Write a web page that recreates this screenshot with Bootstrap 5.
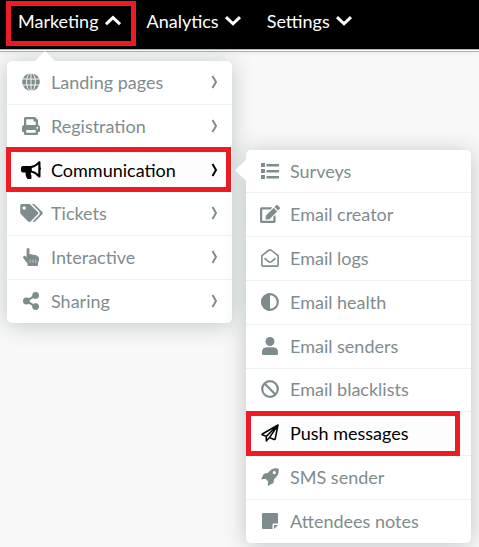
<!DOCTYPE html>
<html lang="en">
<head>
<meta charset="utf-8">
<meta name="viewport" content="width=device-width, initial-scale=1">
<title>Event manager</title>
<link href="https://cdn.jsdelivr.net/npm/bootstrap@5.3.0/dist/css/bootstrap.min.css" rel="stylesheet">
<style>
body { background: #f8f8f8; font-family: Lato, "Liberation Sans", sans-serif; font-size: 18px; line-height: 24px; }
.topbar { background: #000; padding: 9px 18px 16px; border-bottom: 1px solid #b5b5b5; box-shadow: 0 1px #fff, 0 2px #b0b0b0, 0 3px 4px rgba(0,0,0,.06); }
.topnav { gap: 26px; }
.topnav > li > button { color: #fff; gap: 6px; font-size: 18px; line-height: 24px; }
svg { display: block; fill: currentColor; flex: none; }
.line { fill: none; stroke: currentColor; }
.flyout { display: flex; flex-direction: column; width: 225px; min-height: 262px; border-radius: 5px; box-shadow: 0 2px 22px rgba(52,73,74,.28); z-index: 10; }
.flyout > li { flex: 1 1 0; display: flex; position: relative; }
.flyout > li + li { border-top: 1px solid #ecf0f1; }
.entry { display: flex; flex: 1; align-items: center; gap: 8px; padding: 8px 14px 9px 12px; color: #7f8c8d; text-decoration: none; }
.entry.current { color: #000; background: #fdfdfd; }
.glyph { width: 24px; display: flex; justify-content: center; flex: none; }
.main-menu { top: 52px; left: -11px; }
.flyout.sub-menu { top: 1px; left: 239px; min-height: 393px; }
.flyout::before { content: ""; position: absolute; background: #fff; }
.main-menu::before { left: 27px; top: -10px; width: 22px; height: 11px; clip-path: polygon(50% 0, 100% 100%, 0 100%); }
.sub-menu::before { left: -11px; top: 9px; width: 12px; height: 23px; clip-path: polygon(100% 0, 100% 100%, 0 50%); }
.framed { position: relative; }
.framed::after { content: ""; position: absolute; border: 5px solid #ed1c24; pointer-events: none; z-index: 2; }
.frame-nav::after { inset: -8px -15px -13px -12px; }
.frame-main::after { inset: -2px 1px -1px -1px; }
.frame-sub::after { inset: -1px 11px -1px 0; }
</style>
</head>
<body class="min-vh-100">
<header class="topbar">
<nav aria-label="Main">
<ul class="topnav list-unstyled d-flex mb-0">
<li class="framed frame-nav">
<button type="button" class="btn p-0 border-0 rounded-0 d-flex align-items-center" aria-expanded="true">Marketing
<svg class="line" width="16" height="12" viewBox="0 0 16 12" stroke-width="3"><path d="M1 9.2 8 2.6l7 6.6"/></svg></button>
<ul class="flyout main-menu list-unstyled position-absolute bg-white mb-0">
<li><a class="entry" href="#"><span class="glyph"><svg width="18" height="18" viewBox="0 0 18 18"><circle cx="9" cy="9" r="8.8"/><path d="M0 6h18M0 12h18M9 0v18" stroke="#fff" stroke-width=".9"/><ellipse cx="9" cy="9" rx="4.4" ry="9" fill="none" stroke="#fff" stroke-width=".9"/></svg></span>Landing pages<svg class="line ms-auto" width="8" height="14" viewBox="0 0 8 14" stroke-width="2"><path d="M2.500 1 6 7l-3.500 6"/></svg></a></li>
<li><a class="entry" href="#"><span class="glyph"><svg width="18" height="18" viewBox="0 0 18 18" fill-rule="evenodd"><path d="M2 8V1.500Q2 0 3.500 0H13l3 3v5q2 .3 2 2.300V14q0 1-1 1h-1v2q0 1-1 1H3q-1 0-1-1v-2H1q-1 0-1-1v-3.700Q0 8.300 2 8zM4.300 2.200V8h9.400V4.500h-2.200V2.200zM4.300 13v2.800h9.400V13zM15.300 10a.9.9 0 1 0 .01 0z"/></svg></span>Registration<svg class="line ms-auto" width="8" height="14" viewBox="0 0 8 14" stroke-width="2"><path d="M2.500 1 6 7l-3.500 6"/></svg></a></li>
<li class="framed frame-main"><a class="entry current" href="#" aria-expanded="true"><span class="glyph"><svg width="20" height="18" viewBox="0 0 20 18" fill-rule="evenodd"><path d="M2 5h7.500Q14 4.500 17.500.5q2-.9 2 1v4.800q1 1.200 0 2.600v6.300q0 1.900-2 1-3.500-4-7.300-4.600-.8 1.200.2 2.800.5.8-.3 1.500.8 1 .4 1.500-1.800 1.500-4.500.2Q4.200 14 4.600 11.500H2Q0 11.500 0 9.700V6.800Q0 5 2 5zM10.800 7v2.700q3.500.5 6.500 3.200V3.600Q14.300 6.400 10.800 7z"/></svg></span>Communication<svg class="line ms-auto" width="8" height="14" viewBox="0 0 8 14" stroke-width="2"><path d="M2.500 1 6 7l-3.500 6"/></svg></a>
<ul class="flyout sub-menu list-unstyled position-absolute bg-white mb-0">
<li><a class="entry" href="#"><span class="glyph"><svg width="18" height="16" viewBox="0 0 18 16"><path d="M0 0h4v4H0zM0 6h4v4H0zM0 12h4v4H0zM5.500 1H18v2.600H5.500zM5.500 7H18v2.600H5.500zM5.500 13H18v2.600H5.500z"/></svg></span>Surveys</a></li>
<li><a class="entry" href="#"><span class="glyph"><svg width="20" height="18" viewBox="0 0 576 512"><path d="M402.600 83.200l90.200 90.200c3.800 3.800 3.800 10 0 13.800L274.400 405.600l-92.800 10.300c-12.400 1.400-22.900-9.100-21.500-21.500l10.300-92.800L388.800 83.200c3.800-3.800 10-3.800 13.800 0zm162-22.900l-48.800-48.800c-15.200-15.200-39.900-15.200-55.200 0l-35.400 35.400c-3.800 3.800-3.800 10 0 13.800l90.200 90.200c3.800 3.800 10 3.800 13.800 0l35.400-35.400c15.200-15.300 15.200-40 0-55.200zM384 346.200V448H64V128h229.800c3.200 0 6.200-1.300 8.500-3.500l40-40c7.600-7.600 2.200-20.500-8.500-20.500H48C21.500 64 0 85.500 0 112v352c0 26.500 21.500 48 48 48h352c26.500 0 48-21.500 48-48V306.200c0-10.700-12.900-16-20.500-8.500l-40 40c-2.200 2.300-3.500 5.300-3.500 8.500z"/></svg></span>Email creator</a></li>
<li><a class="entry" href="#"><span class="glyph"><svg class="line" width="18" height="18" viewBox="0 0 18 18" stroke-width="1.6" stroke-linejoin="round"><path d="M.9 6.600 7.500 1.500Q9 .3 10.500 1.500l6.600 5.100V16q0 1.100-1.100 1.100H2Q.9 17.100.9 16z"/><path d="m3.500 9.200 4 3.400q1.500 1.200 3 0l4-3.400"/></svg></span>Email logs</a></li>
<li><a class="entry" href="#"><span class="glyph"><svg width="18" height="18" viewBox="0 0 18 18"><path d="M9 0a9 9 0 0 0 0 18z"/><circle class="line" cx="9" cy="9" r="7.800" stroke-width="2.200"/></svg></span>Email health</a></li>
<li><a class="entry" href="#"><span class="glyph"><svg width="16" height="18" viewBox="0 0 16 18"><circle cx="8" cy="4.500" r="4.500"/><path d="M4.700 10.300h6.600Q16 10.500 16 15.200v1.300q0 1.500-1.500 1.500h-13Q0 18 0 16.500v-1.300q0-4.700 4.700-4.900z"/></svg></span>Email senders</a></li>
<li><a class="entry" href="#"><span class="glyph"><svg class="line" width="18" height="18" viewBox="0 0 18 18" stroke-width="2.200"><circle cx="9" cy="9" r="7.800"/><path d="m3.500 3.500 11 11"/></svg></span>Email blacklists</a></li>
<li class="framed frame-sub"><a class="entry current" href="#"><span class="glyph"><svg class="line" width="18" height="18" viewBox="0 0 18 18" stroke-width="1.500" stroke-linejoin="round"><path d="M17 1 1.300 10q-.5.500 0 .8l4 1.600V17l3.200-3.400 4.700 1.900q.8.200 1-.5zM5.300 12.400 17 1 8.500 13.600"/></svg></span>Push messages</a></li>
<li><a class="entry" href="#"><span class="glyph"><svg width="18" height="18" viewBox="0 0 18 18" fill-rule="evenodd"><path d="M17.500.5q1.300 6.500-4.500 10.700l-.4 3q-.2.900-1 1.300L7.500 17.600q-1 .4-.8-.8l.5-3.300-2.700-2.700-3.300.5Q0 11.500.4 10.500l2.100-4.100q.4-.8 1.300-1l3-.4Q11-.8 17.500.5zM13.300 3.100a1.600 1.600 0 1 0 .01 0z"/></svg></span>SMS sender</a></li>
<li><a class="entry" href="#"><span class="glyph"><svg width="16" height="16" viewBox="0 0 16 16"><path d="M1 0h14q1 0 1 1v9.600h-4.500q-1 0-1 1V16H1q-1 0-1-1V1q0-1 1-1zM12 12h4l-4 4z"/></svg></span>Attendees notes</a></li>
</ul></li>
<li><a class="entry" href="#"><span class="glyph"><svg width="23" height="18" viewBox="0 0 640 512"><path d="M497.941 225.941L286.059 14.059A48 48 0 0 0 252.118 0H48C21.490 0 0 21.490 0 48v204.118a48 48 0 0 0 14.059 33.941l211.882 211.882c18.744 18.745 49.136 18.746 67.882 0l204.118-204.118c18.745-18.745 18.745-49.137 0-67.882zM112 160c-26.510 0-48-21.490-48-48s21.490-48 48-48 48 21.490 48 48-21.490 48-48 48zm513.941 133.823L421.823 497.941c-18.745 18.745-49.137 18.745-67.882 0l-.36-.36L527.640 323.522c16.999-16.999 26.360-39.600 26.360-63.640s-9.362-46.641-26.360-63.640L331.397 0h48.721a48 48 0 0 1 33.941 14.059l211.882 211.882c18.745 18.745 18.745 49.137 0 67.882z"/></svg></span>Tickets<svg class="line ms-auto" width="8" height="14" viewBox="0 0 8 14" stroke-width="2"><path d="M2.500 1 6 7l-3.500 6"/></svg></a></li>
<li><a class="entry" href="#"><span class="glyph"><svg width="16" height="18" viewBox="0 0 16 18"><path d="M3.600 1.500Q3.600 0 5 0t1.500 1.500v5q1.500-1 2.700.3 1.500-.8 2.500.4Q14 6.600 14 8.200q2-.2 2 2v1.500q0 1.500-1 3V17q0 1-1 1H5.500q-1 0-1-1v-1.500L.4 10.300Q-.4 9 .6 8.200t2 0l1 1z"/><path d="M7.200 11.500v3.500M10 11.500v3.500M12.700 11.500v3.500" stroke="#fff" stroke-width=".6" opacity=".8"/></svg></span>Interactive<svg class="line ms-auto" width="8" height="14" viewBox="0 0 8 14" stroke-width="2"><path d="M2.500 1 6 7l-3.500 6"/></svg></a></li>
<li><a class="entry" href="#"><span class="glyph"><svg width="16" height="18" viewBox="0 0 16 18"><circle cx="12.600" cy="3.400" r="3.400"/><circle cx="3.400" cy="9" r="3.400"/><circle cx="12.600" cy="14.600" r="3.400"/><path class="line" d="M12.600 3.400 3.400 9l9.200 5.600" stroke-width="2.100"/></svg></span>Sharing<svg class="line ms-auto" width="8" height="14" viewBox="0 0 8 14" stroke-width="2"><path d="M2.500 1 6 7l-3.500 6"/></svg></a></li>
</ul>
</li>
<li><button type="button" class="btn p-0 border-0 rounded-0 d-flex align-items-center">Analytics
<svg class="line" width="16" height="12" viewBox="0 0 16 12" stroke-width="3"><path d="m1 2.200 7 6.600 7-6.600"/></svg></button></li>
<li><button type="button" class="btn p-0 border-0 rounded-0 d-flex align-items-center">Settings
<svg class="line" width="16" height="12" viewBox="0 0 16 12" stroke-width="3"><path d="m1 2.200 7 6.600 7-6.600"/></svg></button></li>
</ul>
</nav>
</header>
<script src="https://cdn.jsdelivr.net/npm/bootstrap@5.3.0/dist/js/bootstrap.bundle.min.js"></script>
</body>
</html>
